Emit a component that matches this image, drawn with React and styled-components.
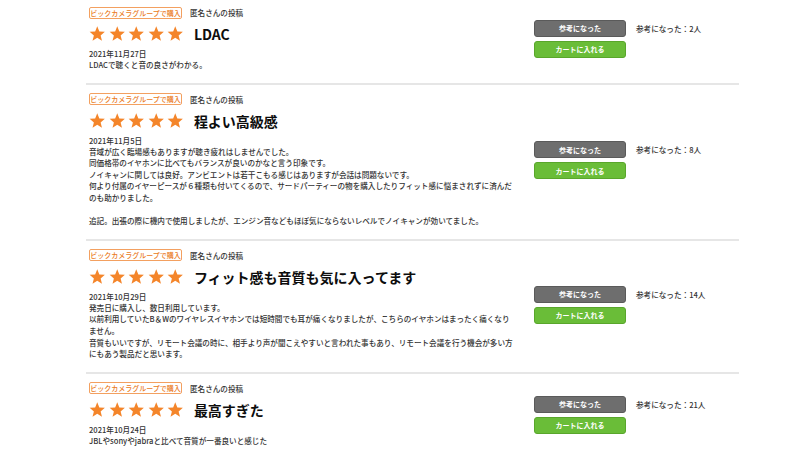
import React from "react";
import styled, { createGlobalStyle } from "styled-components";

const reviews = [
  {
    title: "LDAC",
    date: "2021年11月27日",
    lines: ["LDACで聴くと音の良さがわかる。"],
    helpful: 2,
  },
  {
    title: "程よい高級感",
    date: "2021年11月5日",
    lines: [
      "音域が広く臨場感もありますが聴き疲れはしませんでした。",
      "同価格帯のイヤホンに比べてもバランスが良いのかなと言う印象です。",
      "ノイキャンに関しては良好。アンビエントは若干こもる感じはありますが会話は問題ないです。",
      "何より付属のイヤーピースが６種類も付いてくるので、サードパーティーの物を購入したりフィット感に悩まされずに済んだ",
      "のも助かりました。",
      "",
      "追記。出張の際に機内で使用しましたが、エンジン音などもほぼ気にならないレベルでノイキャンが効いてました。",
    ],
    helpful: 8,
  },
  {
    title: "フィット感も音質も気に入ってます",
    date: "2021年10月29日",
    lines: [
      "発売日に購入し、数日利用しています。",
      "以前利用していたB＆Wのワイヤレスイヤホンでは短時間でも耳が痛くなりましたが、こちらのイヤホンはまったく痛くなり",
      "ません。",
      "音質もいいですが、リモート会議の時に、相手より声が聞こえやすいと言われた事もあり、リモート会議を行う機会が多い方",
      "にもあう製品だと思います。",
    ],
    helpful: 14,
  },
  {
    title: "最高すぎた",
    date: "2021年10月24日",
    lines: ["JBLやsonyやjabraと比べて音質が一番良いと感じた"],
    helpful: 21,
  },
];

const GlobalStyle = createGlobalStyle`
  html, body {
    margin: 0;
    padding: 0;
    background: #fff;
    overflow: hidden;
  }
  body {
    font-family: "Noto Sans CJK JP", "Noto Sans", sans-serif;
    color: #333;
  }
`;

const Star = () => (
  <svg width="16.5" height="15.5" viewBox="0 0 24 23">
    <path
      d="M12 0.5l3.1 7.6 8.2 0.6-6.3 5.3 2 8-7-4.4-7 4.4 2-8L0.7 8.7l8.2-0.6z"
      fill="#f4852a"
    />
  </svg>
);

const App = () => {
  return (
    <>
      <GlobalStyle />
      <ReviewList>
        {reviews.map((r, i) => (
          <Review key={i} $first={i === 0}>
            <Main>
              <Meta>
                <Badge>ビックカメラグループで購入</Badge>
                <Author>匿名さんの投稿</Author>
              </Meta>
              <TitleRow>
                <Stars>
                  {[0, 1, 2, 3, 4].map((s) => (
                    <Star key={s} />
                  ))}
                </Stars>
                <Title>{r.title}</Title>
              </TitleRow>
              <Date>{r.date}</Date>
              <Body>
                {r.lines.map((l, j) => (
                  <Line key={j}>{l || "\u00a0"}</Line>
                ))}
              </Body>
            </Main>
            <Actions>
              <ActionRow>
                <Button $kind="gray">参考になった</Button>
                <Count>参考になった：{r.helpful}人</Count>
              </ActionRow>
              <ActionRow>
                <Button $kind="green">カートに入れる</Button>
              </ActionRow>
            </Actions>
          </Review>
        ))}
      </ReviewList>
    </>
  );
};

export default App;

const ReviewList = styled.div`
  margin: -2px 0 0 86px;
  width: 653px;
`;

const Review = styled.div`
  display: flex;
  align-items: center;
  border-top: ${(p) => (p.$first ? "none" : "2px solid #e6e6e6")};
  padding: 9px 0 12px 3px;
`;

const Main = styled.div`
  width: 432px;
  flex-shrink: 0;
`;

const Meta = styled.div`
  display: flex;
  align-items: center;
  height: 11px;
`;

const Badge = styled.span`
  box-sizing: border-box;
  height: 12px;
  width: 93px;
  display: flex;
  align-items: center;
  justify-content: center;
  border: 1px solid #f3a060;
  border-radius: 2px;
  color: #ea7a22;
  font-size: 7px;
  font-weight: 500;
  white-space: nowrap;
`;

const Author = styled.span`
  margin-left: 8px;
  font-size: 7.6px;
  font-weight: 500;
  color: #333;
  white-space: nowrap;
`;

const TitleRow = styled.div`
  display: flex;
  align-items: center;
  height: 18px;
  margin-top: 7px;
`;

const Stars = styled.div`
  display: flex;
  gap: 3.1px;
  svg {
    display: block;
  }
`;

const Title = styled.span`
  margin-left: 10px;
  font-size: 14px;
  font-weight: bold;
  color: #0d0d0d;
  white-space: nowrap;
`;

const Date = styled.div`
  margin-top: 5px;
  font-size: 7.6px;
  font-weight: 500;
  line-height: 11px;
  color: #333;
`;

const Body = styled.div`
  font-size: 7.6px;
  font-weight: 500;
  line-height: 11.6px;
  color: #333;
`;

const Line = styled.div`
  white-space: nowrap;
`;

const Actions = styled.div`
  display: flex;
  flex-direction: column;
  gap: 4px;
  margin-left: 13px;
`;

const ActionRow = styled.div`
  display: flex;
  align-items: center;
`;

const Button = styled.div`
  box-sizing: border-box;
  width: 92px;
  height: 17px;
  display: flex;
  align-items: center;
  justify-content: center;
  border-radius: 3px;
  font-size: 7px;
  font-weight: bold;
  color: #fff;
  background: ${(p) => (p.$kind === "green" ? "#6abd38" : "#6e6e6e")};
  border: 1px solid ${(p) => (p.$kind === "green" ? "#59a62b" : "#5a5a5a")};
`;

const Count = styled.div`
  margin-left: 10px;
  font-size: 7.6px;
  font-weight: 500;
  color: #333;
  white-space: nowrap;
`;
